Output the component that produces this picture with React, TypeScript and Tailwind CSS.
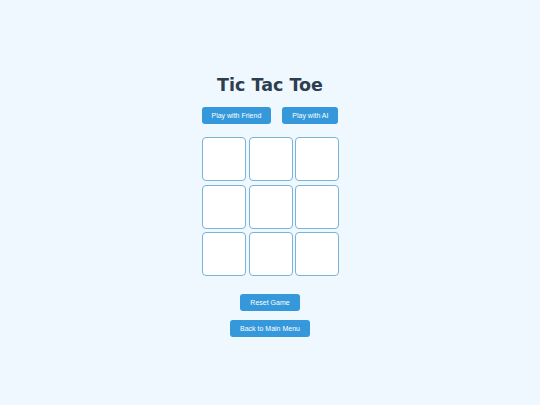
import React, { useState } from 'react';

type Cell = 'X' | 'O' | null;

const App: React.FC = () => {
  const [board, setBoard] = useState<Cell[]>(Array(9).fill(null));
  const [turn, setTurn] = useState<'X' | 'O'>('X');

  const play = (i: number) => {
    if (board[i]) return;
    const next = [...board];
    next[i] = turn;
    setBoard(next);
    setTurn(turn === 'X' ? 'O' : 'X');
  };

  const reset = () => {
    setBoard(Array(9).fill(null));
    setTurn('X');
  };

  const btn =
    'bg-[#3498db] text-white rounded-[3px] h-[17px] px-[10px] text-[7px] leading-none';

  return (
    <div
      className="w-[540px] h-[405px] bg-[#f0f8ff] flex flex-col items-center pt-[74px]"
      style={{ fontFamily: '"Liberation Sans", Arial, sans-serif' }}
    >
      {/* Title */}
      <h1
        className="text-[17.5px] font-bold text-[#2c3e50] leading-[22px]"
        style={{ fontFamily: '"DejaVu Sans", Verdana, sans-serif' }}
      >
        Tic Tac Toe
      </h1>

      {/* Mode selector */}
      <div className="flex gap-[11px] mt-[11px]">
        <button className={btn}>Play with Friend</button>
        <button className={btn}>Play with AI</button>
      </div>

      {/* Board */}
      <div className="grid grid-cols-3 gap-x-[2.5px] gap-y-[3.5px] mt-[13px] ml-[1px]">
        {board.map((c, i) => (
          <button
            key={i}
            onClick={() => play(i)}
            className="w-[44px] h-[44px] bg-white border-[1.5px] border-[#7ab3d8] rounded-[4px] text-[22px] font-bold text-[#2c3e50]"
          >
            {c}
          </button>
        ))}
      </div>

      {/* Controls */}
      <button className={`${btn} mt-[18px]`} onClick={reset}>
        Reset Game
      </button>
      <button className={`${btn} mt-[9px]`}>Back to Main Menu</button>
    </div>
  );
};

export default App;
